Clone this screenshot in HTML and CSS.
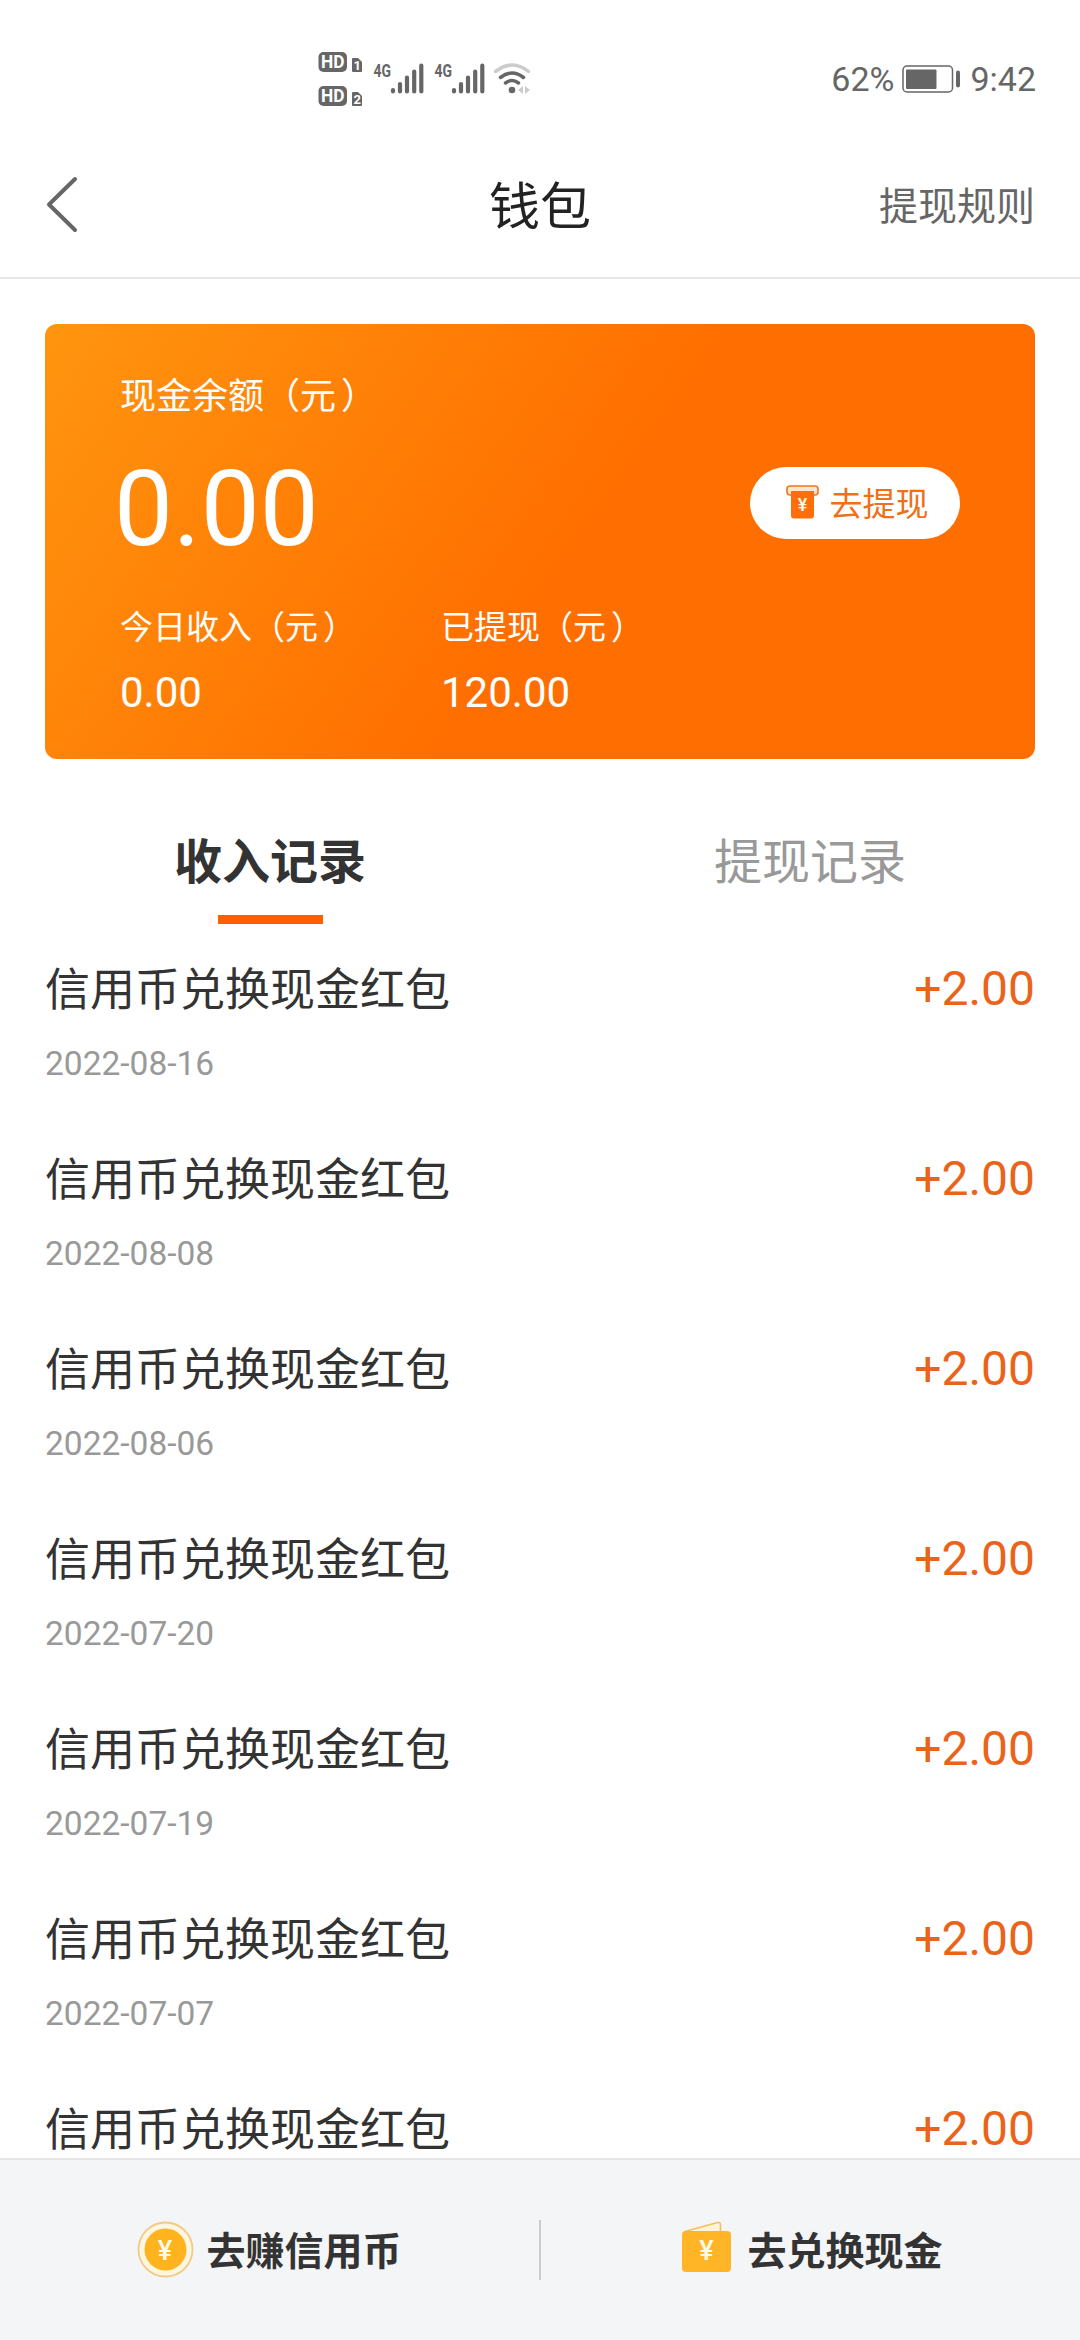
FILE: index.html
```html
<!DOCTYPE html>
<html lang="zh-CN">
<head>
  <meta charset="UTF-8" />
  <meta name="viewport" content="width=device-width, initial-scale=1" />
  <title>钱包</title>
  <link rel="stylesheet" href="styles.css">
</head>
<body>
  <div class="page">
    <div class="status-bar">
      <svg class="status-icons" width="216" height="60" viewBox="0 0 216 60">
        <!-- HD badges -->
        <rect x="1.500" y="3" width="28.500" height="20" rx="5" fill="#666" />
        <text x="4" y="19" class="hd-text" textLength="23.500" lengthAdjust="spacingAndGlyphs">HD</text>
        <rect x="1.500" y="37" width="28.500" height="20" rx="5" fill="#666" />
        <text x="4" y="53" class="hd-text" textLength="23.500" lengthAdjust="spacingAndGlyphs">HD</text>
        <path d="M36 9h5l4 4v9a1 1 0 0 1-1 1h-8a1 1 0 0 1-1-1v-12a1 1 0 0 1 1-1z" fill="#666" />
        <text x="36.500" y="21" class="sim-text">1</text>
        <path d="M36 43h5l4 4v9a1 1 0 0 1-1 1h-8a1 1 0 0 1-1-1v-12a1 1 0 0 1 1-1z" fill="#666" />
        <text x="36.500" y="55" class="sim-text">2</text>

        <!-- signal -->
        <text x="56.500" y="28" class="net-text" textLength="17.500" lengthAdjust="spacingAndGlyphs">4G</text>
        <path d="M76 41v1.500M83 35v7.500M90 28.500v14M97.200 22.500v20M104.300 16.500v26" stroke="#666" stroke-width="4.200" stroke-linecap="round" />
        <text x="117.500" y="28" class="net-text" textLength="17.500" lengthAdjust="spacingAndGlyphs">4G</text>
        <path d="M137 41v1.500M144 35v7.500M151 28.500v14M158.200 22.500v20M165.300 16.500v26" stroke="#666" stroke-width="4.200" stroke-linecap="round" />

        <!-- wifi -->
        <g fill="none" stroke-linecap="round" stroke-width="3.500">
          <path d="M178.500 22.500q17-13 33 0" stroke="#ccc" />
          <path d="M183.500 28.500q11.500-9 23 0" stroke="#666" />
          <path d="M188.500 34q6.500-5 13 0" stroke="#666" />
        </g>
        <circle cx="195" cy="41" r="3.300" fill="#666" />
        <path d="M206 37v8l-5-4zM208 37v8l5-4z" fill="#ccc" />
      </svg>
      <div class="status-right">
        <span>62%</span>
        <svg class="battery" width="60" height="28" viewBox="0 0 60 28">
          <rect x="1" y="1" width="49.500" height="26" rx="4" fill="none" stroke="#666" stroke-width="1.500" />
          <rect x="4" y="4.500" width="30.500" height="19.500" rx="1" fill="#666" />
          <rect x="54" y="5.500" width="4" height="17" rx="2" fill="#666" />
        </svg>
        <span>9:42</span>
      </div>
    </div>

    <div class="header">
      <svg class="back" width="34" height="58" viewBox="0 0 34 58">
        <path d="M30 3L4 28.500L30 54" fill="none" stroke="#666" stroke-width="4" stroke-linecap="round" stroke-linejoin="round" />
      </svg>
      <h1 class="title">钱包</h1>
      <a class="rules">提现规则</a>
    </div>

    <div class="card">
      <div class="card-info">
        <div class="balance-label">现金余额（元<span class="paren">）</span></div>
        <div class="balance">0.00</div>
        <div class="stats">
          <div class="stat">
            <div class="stat-label">今日收入（元<span class="paren">）</span></div>
            <div class="stat-value">0.00</div>
          </div>
          <div class="stat">
            <div class="stat-label">已提现（元<span class="paren">）</span></div>
            <div class="stat-value">120.00</div>
          </div>
        </div>
      </div>
      <button class="withdraw">
        <svg width="33" height="34" viewBox="0 0 33 34">
          <rect x="1" y="1" width="31" height="9" rx="3" fill="#ffe6cc" stroke="#f07420" stroke-width="1.600" />
          <path d="M5 6h23v24.500a3 3 0 0 1-3 3h-17a3 3 0 0 1-3-3z" fill="#ff6e0a" />
          <text x="16.500" y="25.500" class="yen" font-size="18">¥</text>
        </svg>
        <span>去提现</span>
      </button>
    </div>

    <div class="tabs">
      <div class="tab active">收入记录</div>
      <div class="tab">提现记录</div>
    </div>

    <div class="list">
      <div class="item">
        <div class="item-row"><span class="name">信用币兑换现金红包</span><span class="amount">+2.00</span></div>
        <div class="date">2022-08-16</div>
      </div>
      <div class="item">
        <div class="item-row"><span class="name">信用币兑换现金红包</span><span class="amount">+2.00</span></div>
        <div class="date">2022-08-08</div>
      </div>
      <div class="item">
        <div class="item-row"><span class="name">信用币兑换现金红包</span><span class="amount">+2.00</span></div>
        <div class="date">2022-08-06</div>
      </div>
      <div class="item">
        <div class="item-row"><span class="name">信用币兑换现金红包</span><span class="amount">+2.00</span></div>
        <div class="date">2022-07-20</div>
      </div>
      <div class="item">
        <div class="item-row"><span class="name">信用币兑换现金红包</span><span class="amount">+2.00</span></div>
        <div class="date">2022-07-19</div>
      </div>
      <div class="item">
        <div class="item-row"><span class="name">信用币兑换现金红包</span><span class="amount">+2.00</span></div>
        <div class="date">2022-07-07</div>
      </div>
      <div class="item">
        <div class="item-row"><span class="name">信用币兑换现金红包</span><span class="amount">+2.00</span></div>
      </div>
    </div>

    <div class="footer">
      <div class="footer-btn">
        <svg width="57" height="57" viewBox="0 0 57 57">
          <circle cx="28.500" cy="28.500" r="27" fill="#fff6e2" stroke="#f3ca80" stroke-width="1.800" />
          <circle cx="28.500" cy="28.500" r="21" fill="#ffb31f" />
          <text x="28" y="38.500" class="yen" font-size="27">¥</text>
        </svg>
        <span>去赚信用币</span>
      </div>
      <div class="divider"></div>
      <div class="footer-btn">
        <svg width="57" height="57" viewBox="0 0 57 57">
          <path d="M7 10.500L39.500 1.500q3-.5 3 2.500v8h-35.500z" fill="#fff3dc" stroke="#f3bd60" stroke-width="1.600" />
          <rect x="4" y="10" width="49" height="41" rx="4" fill="#ffb525" />
          <text x="28.500" y="38.500" class="yen" font-size="27">¥</text>
        </svg>
        <span>去兑换现金</span>
      </div>
    </div>
  </div>
</body>
</html>
```
FILE: styles.css
```css
* {
  box-sizing: border-box;
}

body {
  margin: 0;
  font-family: Roboto, "Noto Sans CJK SC", sans-serif;
  background-color: #fff;
  color: #333;
}

.page {
  display: flex;
  flex-direction: column;
  height: 2340px;
  overflow: hidden;
}

/* Status bar */
.status-bar {
  flex: none;
  display: flex;
  justify-content: space-between;
  height: 132px;
  padding: 49px 44px 0 317px;
}

.status-right {
  display: flex;
  align-items: center;
  height: 60px;
  font-size: 34px;
  color: #666;
}

.battery {
  margin: 0 8px 0 8px;
}

.hd-text {
  font: 700 18px Roboto, sans-serif;
  fill: #fff;
}

.sim-text {
  font: 700 13px Roboto, sans-serif;
  fill: #fff;
}

.net-text {
  font: 700 19px Roboto, sans-serif;
  fill: #666;
}

.yen {
  font-family: Roboto, sans-serif;
  font-weight: 500;
  text-anchor: middle;
  fill: #fffbe8;
}

/* Header */
.header {
  flex: none;
  display: grid;
  grid-template-columns: 1fr auto 1fr;
  align-items: center;
  height: 147px;
  padding: 0 45px;
  border-bottom: 2px solid #e5e5e5;
}

.title {
  margin: 0 0 4px;
  font-size: 51px;
  font-weight: 400;
  color: #222;
}

.rules {
  justify-self: end;
  margin-bottom: 4px;
  font-size: 39px;
  color: #666;
}

/* Balance card */
.card {
  flex: none;
  display: flex;
  justify-content: space-between;
  height: 435px;
  margin: 45px 45px 0;
  padding: 0 75px;
  border-radius: 12px;
  background: linear-gradient(125deg, #ff950f 0%, #ff6e00 54%);
  color: #fff;
}

.balance-label {
  margin-top: 47px;
  font-size: 36px;
  line-height: 52px;
}

.paren {
  margin-left: 5px;
}

.balance {
  margin: 27px 0 0 -6px;
  font-size: 105px;
  line-height: 120px;
}

.stats {
  display: flex;
  gap: 85px;
  margin-top: 34px;
}

.stat-label {
  font-size: 33px;
  line-height: 48px;
}

.stat-value {
  margin-top: 17px;
  font-size: 42px;
  line-height: 48px;
}

.withdraw {
  display: flex;
  align-items: center;
  justify-content: center;
  gap: 11px;
  width: 210px;
  height: 72px;
  margin-top: 143px;
  padding: 0 0 2px 4px;
  border: none;
  border-radius: 36px;
  background-color: #fff;
  font-family: inherit;
  font-size: 33px;
  color: #ee7018;
}

/* Tabs */
.tabs {
  flex: none;
  display: flex;
  margin-top: 39px;
}

.tab {
  flex: 1;
  display: flex;
  flex-direction: column;
  align-items: center;
  height: 126px;
  font-size: 48px;
  line-height: 130px;
  color: #999;
}

.tab.active {
  font-weight: 700;
  color: #333;
}

.tab.active::after {
  content: "";
  width: 105px;
  height: 9px;
  margin-top: -13px;
  background-color: #ff5f00;
}

/* Records */
.list {
  flex: 1;
  min-height: 0;
  overflow: hidden;
}

.item {
  height: 190px;
  padding: 34px 45px 0;
}

.item-row {
  display: flex;
  justify-content: space-between;
  height: 60px;
  line-height: 62px;
}

.name {
  font-size: 45px;
  line-height: 65px;
}

.amount {
  font-size: 48px;
  color: #e9641a;
}

.date {
  margin-top: 26px;
  font-size: 33.5px;
  line-height: 40px;
  color: #999;
}

/* Footer */
.footer {
  flex: none;
  display: flex;
  align-items: center;
  height: 182px;
  border-top: 2px solid #e5e5e5;
  background-color: #f4f5f7;
}

.footer-btn {
  flex: 1;
  display: flex;
  align-items: center;
  justify-content: center;
  gap: 12px;
  padding-bottom: 2px;
  font-size: 39px;
  font-weight: 700;
}

.footer-btn span {
  margin-bottom: 2px;
}

.divider {
  width: 2px;
  height: 60px;
  background-color: #ccc;
}
```
